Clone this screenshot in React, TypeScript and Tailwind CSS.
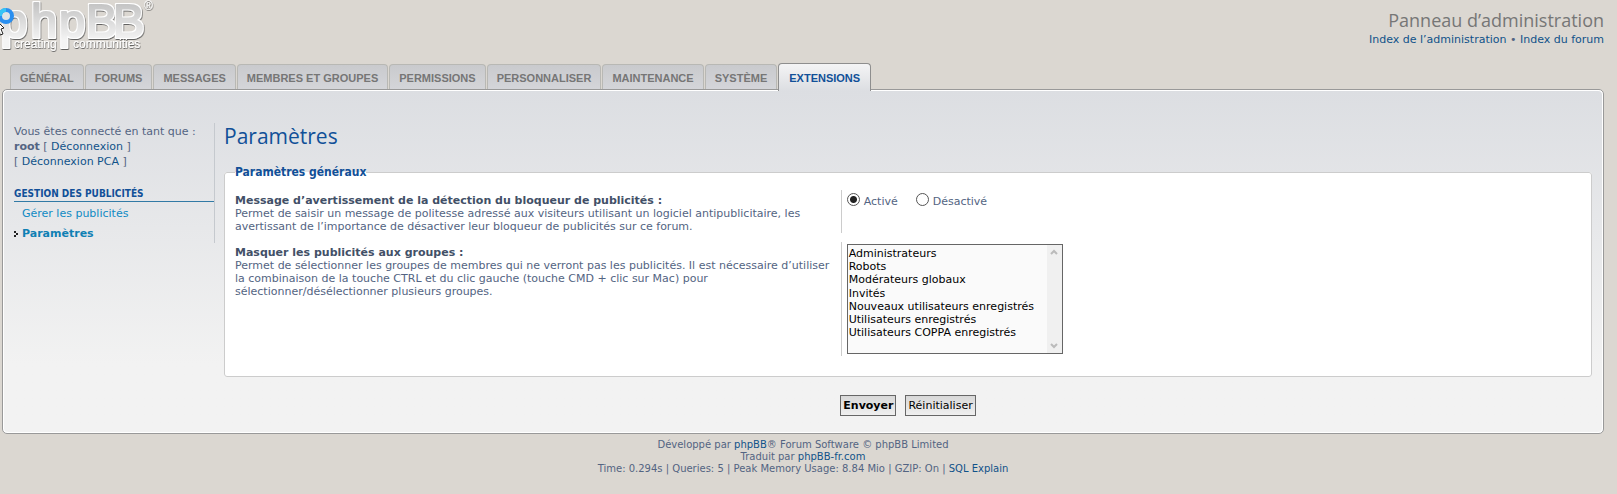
import type { ReactNode } from "react"

const tabs = [
  "Général",
  "Forums",
  "Messages",
  "Membres et groupes",
  "Permissions",
  "Personnaliser",
  "Maintenance",
  "Système",
  "Extensions",
]

const groups = [
  "Administrateurs",
  "Robots",
  "Modérateurs globaux",
  "Invités",
  "Nouveaux utilisateurs enregistrés",
  "Utilisateurs enregistrés",
  "Utilisateurs COPPA enregistrés",
]

function Link({ children }: { children: ReactNode }) {
  return (
    <a href="#" className="text-[#105289] hover:underline">
      {children}
    </a>
  )
}

function Logo() {
  return (
    <svg width="156" height="56" viewBox="0 0 156 56" role="img" aria-label="phpBB">
      <defs>
        <linearGradient id="letters" gradientUnits="userSpaceOnUse" x1="0" y1="4" x2="0" y2="40">
          <stop offset="0" stopColor="#c4c4c4" />
          <stop offset="1" stopColor="#f4f4f4" />
        </linearGradient>
        {/* white rim round each letter, then a soft shadow below it */}
        <filter id="rim" filterUnits="userSpaceOnUse" x="-4" y="-4" width="164" height="64">
          <feMorphology in="SourceAlpha" operator="dilate" radius="1" result="wide" />
          <feFlood floodColor="#ffffff" />
          <feComposite in2="wide" operator="in" result="white" />
          <feMerge result="both">
            <feMergeNode in="white" />
            <feMergeNode in="SourceGraphic" />
          </feMerge>
          <feDropShadow in="both" dx="0.6" dy="1" stdDeviation="0.6" floodColor="#555555" floodOpacity="0.9" />
        </filter>
        <filter id="shade" filterUnits="userSpaceOnUse" x="-4" y="-4" width="164" height="64">
          <feDropShadow dx="0.5" dy="1" stdDeviation="0.5" floodColor="#555555" floodOpacity="0.9" />
        </filter>
      </defs>
      <text
        x="1 31 59 86 113"
        y="37"
        fontFamily="'Liberation Sans', sans-serif"
        fontSize="47"
        fill="url(#letters)"
        stroke="url(#letters)"
        strokeWidth="2"
        strokeLinejoin="round"
        filter="url(#rim)"
      >
        phpBB
      </text>
      <g filter="url(#shade)" fontFamily="'Liberation Sans', sans-serif" fontSize="12" fill="#ffffff">
        <text x="14" y="48">
          creating
        </text>
        <text x="73" y="48">
          communities
        </text>
        <text x="144" y="10">
          ®
        </text>
      </g>
      {/* busy pointer */}
      <circle cx="6" cy="16" r="6" fill="#dde3e6" stroke="#2a8ff0" strokeWidth="4" />
      <path d="M0 16a6 6 0 0 1 6 -6" fill="none" stroke="#35c4f5" strokeWidth="4" />
      <path d="M-2 22 L4 28 L1 29 L3 34 L0 35 Z" fill="#ffffff" stroke="#222222" strokeWidth="1" />
    </svg>
  )
}

function Row({ id, title, text, children }: { id: string; title: string; text: string; children: ReactNode }) {
  return (
    <div className="mb-[9px] flex leading-[13px]">
      <div className="w-[45%] shrink-0 pt-1 pr-1">
        <label htmlFor={id} className="font-bold text-[#425067]">
          {title}
        </label>
        <p>{text}</p>
      </div>
      <div className="flex-1 border-l border-[#cccccc] pl-[5px]">{children}</div>
    </div>
  )
}

export default function App() {
  return (
    <div className="min-h-screen bg-[#dbd7d1] pr-[13px] pl-[2px] font-['DejaVu_Sans',Verdana,sans-serif] text-[11px] text-[#536482]">
      <header className="flex h-[64px] justify-between">
        <div className="-ml-[2px]">
          <Logo />
        </div>
        <div className="pt-[8px] text-right">
          <div className="font-['Open_Sans',sans-serif] text-[18px] leading-[24px] text-[#767676]">
            Panneau d’administration
          </div>
          <p className="leading-[15px]">
            <Link>Index de l’administration</Link> • <Link>Index du forum</Link>
          </p>
        </div>
      </header>

      <nav className="flex h-[25px] items-end gap-px pl-[8px] font-['Liberation_Sans',Arial,sans-serif] font-bold uppercase">
        {tabs.map((tab) =>
          tab === "Extensions" ? (
            <a
              key={tab}
              href="#"
              className="relative -mb-[2px] h-[28px] rounded-t-[4px] border border-b-0 border-[#8e8e8e] bg-linear-to-b from-[#f4f4f5] to-[#dcdee2] px-[10px] leading-[28px] text-[#115098]"
            >
              {tab}
            </a>
          ) : (
            <a
              key={tab}
              href="#"
              className="h-[25px] rounded-t-[4px] border border-b-0 border-[#b8b8b4] bg-linear-to-b from-[#c9cacd] to-[#d4d5d9] px-[9px] leading-[26px] text-[#767676]"
            >
              {tab}
            </a>
          ),
        )}
      </nav>

      <div className="rounded-[5px] border border-[#999999] bg-white p-px">
        <div className="flex rounded-[4px] bg-linear-to-b from-[#dcdee2] to-[#f2f2f2] to-80% pr-[10px] pb-4 pl-[10px]">
          <aside className="mt-[32px] h-[120px] w-[201px] shrink-0 border-r border-[#c5c9ce]">
            <p className="pt-px leading-[15px]">
              Vous êtes connecté en tant que :<br />
              <strong>root</strong> [ <Link>Déconnexion</Link> ]<br />[ <Link>Déconnexion PCA</Link> ]
            </p>
            <h2 className="mt-[17px] border-b border-[#327aa5] font-['DejaVu_Sans_Condensed','DejaVu_Sans',sans-serif] text-[10px] leading-[15px] font-bold text-[#115098] uppercase">
              Gestion des publicités
            </h2>
            <ul className="leading-[20px] text-[#0f8ac4]">
              <li className="pt-[2px] pl-2">
                <a href="#">Gérer les publicités</a>
              </li>
              <li className="flex items-center font-bold text-[#0f80b4]">
                <svg width="8" height="6" viewBox="0 0 8 6" fill="#222222" aria-hidden="true">
                  <path d="M0 0h2v2h-2zM2 2h2v2h-2zM0 4h2v2h-2z" />
                </svg>
                <a href="#">Paramètres</a>
              </li>
            </ul>
          </aside>

          <main className="min-w-0 flex-1 pl-[9px]">
            <h1 className="mt-[31px] font-['Open_Sans',sans-serif] text-[21px] leading-[28px] text-[#115098]">
              Paramètres
            </h1>
            <form>
              <fieldset className="mt-[14px] rounded-[3px] border border-[#cccccc] bg-white px-[10px] pb-[11px]">
                <legend className="font-['DejaVu_Sans_Condensed','DejaVu_Sans',sans-serif] text-[12px] leading-[16px] font-bold text-[#115098]">
                  Paramètres généraux
                </legend>
                <div className="pt-[10px]">
                  <Row
                    id="warn"
                    title="Message d’avertissement de la détection du bloqueur de publicités :"
                    text="Permet de saisir un message de politesse adressé aux visiteurs utilisant un logiciel antipublicitaire, les avertissant de l’importance de désactiver leur bloqueur de publicités sur ce forum."
                  >
                    <div className="flex gap-[18px] pt-[3px]">
                      <label className="flex items-start gap-1">
                        <input
                          id="warn"
                          type="radio"
                          name="warn"
                          defaultChecked
                          className="size-[13px] appearance-none rounded-full border border-[#555555] bg-white bg-[radial-gradient(circle,#222222_3px,transparent_4px)]"
                        />
                        <span className="pt-[2px]">Activé</span>
                      </label>
                      <label className="flex items-start gap-1">
                        <input
                          type="radio"
                          name="warn"
                          className="size-[13px] appearance-none rounded-full border border-[#555555] bg-white"
                        />
                        <span className="pt-[2px]">Désactivé</span>
                      </label>
                    </div>
                  </Row>
                  <Row
                    id="groups"
                    title="Masquer les publicités aux groupes :"
                    text="Permet de sélectionner les groupes de membres qui ne verront pas les publicités. Il est nécessaire d’utiliser la combinaison de la touche CTRL et du clic gauche (touche CMD + clic sur Mac) pour sélectionner/désélectionner plusieurs groupes."
                  >
                    <div className="relative my-[2px] w-[216px]">
                      <select
                        id="groups"
                        multiple
                        className="block h-[110px] w-full overflow-hidden border border-[#666666] bg-[#fafafa] py-[2px] text-black"
                      >
                        {groups.map((group) => (
                          <option key={group} className="h-[13px] px-px py-0 leading-[13px]">
                            {group}
                          </option>
                        ))}
                      </select>
                      <div
                        aria-hidden="true"
                        className="absolute inset-y-px right-px flex w-[15px] flex-col items-center justify-between bg-[#f0f0f0] py-[4px]"
                      >
                        <svg width="8" height="6" viewBox="0 0 8 6" fill="none" stroke="#bbbbbb" strokeWidth="2">
                          <path d="M1 5l3-3 3 3" />
                        </svg>
                        <svg width="8" height="6" viewBox="0 0 8 6" fill="none" stroke="#bbbbbb" strokeWidth="2">
                          <path d="M1 1l3 3 3-3" />
                        </svg>
                      </div>
                    </div>
                  </Row>
                </div>
              </fieldset>
              <div className="mt-[18px] flex justify-center gap-[9px] text-black">
                <button
                  type="submit"
                  className="h-[21px] border border-[#666666] bg-linear-to-b from-[#d8d8d8] to-[#efefef] px-[2px] pt-[2px] font-bold"
                >
                  Envoyer
                </button>
                <button
                  type="reset"
                  className="h-[21px] border border-[#666666] bg-linear-to-b from-[#d8d8d8] to-[#efefef] px-[2px] pt-[2px]"
                >
                  Réinitialiser
                </button>
              </div>
            </form>
          </main>
        </div>
      </div>

      <footer className="pt-[5px] text-center text-[10px] leading-[12px]">
        Développé par <Link>phpBB</Link>® Forum Software © phpBB Limited
        <br />
        Traduit par <Link>phpBB-fr.com</Link>
        <br />
        Time: 0.294s | Queries: 5 | Peak Memory Usage: 8.84 Mio | GZIP: On | <Link>SQL Explain</Link>
      </footer>
    </div>
  )
}
